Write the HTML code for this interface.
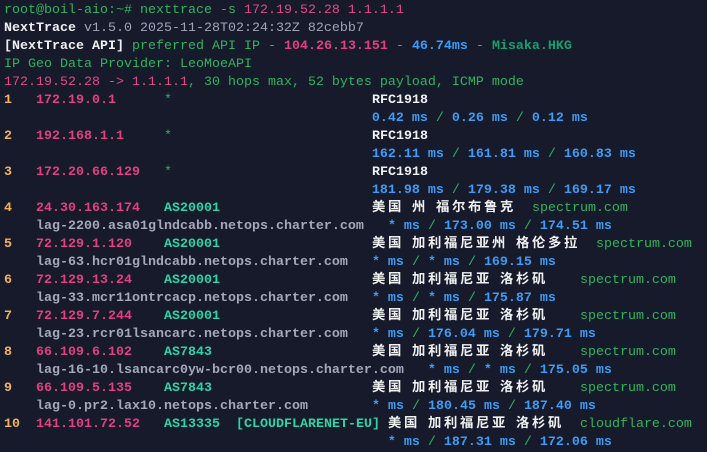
<!DOCTYPE html>
<html><head><meta charset="utf-8"><style>
html,body{margin:0;padding:0;background:#161a2b;width:707px;height:452px;overflow:hidden}
pre{margin:0;padding:2px 0 0 4px;font-family:"Liberation Mono","Noto Sans CJK SC",monospace;font-size:13.33px;line-height:18px;color:#a0a4b8;white-space:pre}
.g{color:#2fb45e}.p{color:#e24a86}.pb{color:#e2407f;font-weight:bold}.w{color:#f0f0f0;font-weight:bold}
.gr{color:#a5a8ba;font-weight:bold}.o{color:#f2b35e;font-weight:bold}.a{color:#2ed4a6;font-weight:bold}
.b{color:#3d9cf5;font-weight:bold}.dg{color:#17a06e;font-weight:bold}
.c{font-family:"Noto Sans CJK SC",sans-serif;letter-spacing:2.67px;color:#f0f0f0;font-weight:bold;line-height:0}
</style></head><body><pre><span class="g">root@boil-aio:~# nexttrace -s </span><span class="p">172.19.52.28 1.1.1.1</span>
<span class="w">NextTrace</span> v1.5.0 2025-11-28T02:24:32Z 82cebb7
<span class="w">[NextTrace API]</span><span class="g"> preferred API IP - </span><span class="pb">104.26.13.151</span><span class="g"> - </span><span class="b">46.74ms</span><span class="g"> - </span><span class="dg">Misaka.HKG</span>
<span class="g">IP Geo Data Provider: LeoMoeAPI</span>
<span class="p">172.19.52.28 -&gt; 1.1.1.1</span><span class="g">, 30 hops max, 52 bytes payload, ICMP mode</span>
<span class="o">1</span>   <span class="pb">172.19.0.1</span>      <span class="g">*</span>                         <span class="w">RFC1918</span>
                                              <span class="b">0.42 ms</span> <span class="g">/</span> <span class="b">0.26 ms</span> <span class="g">/</span> <span class="b">0.12 ms</span>
<span class="o">2</span>   <span class="pb">192.168.1.1</span>     <span class="g">*</span>                         <span class="w">RFC1918</span>
                                              <span class="b">162.11 ms</span> <span class="g">/</span> <span class="b">161.81 ms</span> <span class="g">/</span> <span class="b">160.83 ms</span>
<span class="o">3</span>   <span class="pb">172.20.66.129</span>   <span class="g">*</span>                         <span class="w">RFC1918</span>
                                              <span class="b">181.98 ms</span> <span class="g">/</span> <span class="b">179.38 ms</span> <span class="g">/</span> <span class="b">169.17 ms</span>
<span class="o">4</span>   <span class="pb">24.30.163.174</span>   <span class="a">AS20001</span>                   <span class="c">美国</span> <span class="c">州</span> <span class="c">福尔布鲁克</span>  <span class="g">spectrum.com</span>
    <span class="gr">lag-2200.asa01glndcabb.netops.charter.com</span>   <span class="b">* ms</span> <span class="g">/</span> <span class="b">173.00 ms</span> <span class="g">/</span> <span class="b">174.51 ms</span>
<span class="o">5</span>   <span class="pb">72.129.1.120</span>    <span class="a">AS20001</span>                   <span class="c">美国</span> <span class="c">加利福尼亚州</span> <span class="c">格伦多拉</span>  <span class="g">spectrum.com</span>
    <span class="gr">lag-63.hcr01glndcabb.netops.charter.com</span>   <span class="b">* ms</span> <span class="g">/</span> <span class="b">* ms</span> <span class="g">/</span> <span class="b">169.15 ms</span>
<span class="o">6</span>   <span class="pb">72.129.13.24</span>    <span class="a">AS20001</span>                   <span class="c">美国</span> <span class="c">加利福尼亚</span> <span class="c">洛杉矶</span>    <span class="g">spectrum.com</span>
    <span class="gr">lag-33.mcr11ontrcacp.netops.charter.com</span>   <span class="b">* ms</span> <span class="g">/</span> <span class="b">* ms</span> <span class="g">/</span> <span class="b">175.87 ms</span>
<span class="o">7</span>   <span class="pb">72.129.7.244</span>    <span class="a">AS20001</span>                   <span class="c">美国</span> <span class="c">加利福尼亚</span> <span class="c">洛杉矶</span>    <span class="g">spectrum.com</span>
    <span class="gr">lag-23.rcr01lsancarc.netops.charter.com</span>   <span class="b">* ms</span> <span class="g">/</span> <span class="b">176.04 ms</span> <span class="g">/</span> <span class="b">179.71 ms</span>
<span class="o">8</span>   <span class="pb">66.109.6.102</span>    <span class="a">AS7843</span>                    <span class="c">美国</span> <span class="c">加利福尼亚</span> <span class="c">洛杉矶</span>    <span class="g">spectrum.com</span>
    <span class="gr">lag-16-10.lsancarc0yw-bcr00.netops.charter.com</span>   <span class="b">* ms</span> <span class="g">/</span> <span class="b">* ms</span> <span class="g">/</span> <span class="b">175.05 ms</span>
<span class="o">9</span>   <span class="pb">66.109.5.135</span>    <span class="a">AS7843</span>                    <span class="c">美国</span> <span class="c">加利福尼亚</span> <span class="c">洛杉矶</span>    <span class="g">spectrum.com</span>
    <span class="gr">lag-0.pr2.lax10.netops.charter.com</span>        <span class="b">* ms</span> <span class="g">/</span> <span class="b">180.45 ms</span> <span class="g">/</span> <span class="b">187.40 ms</span>
<span class="o">10</span>  <span class="pb">141.101.72.52</span>   <span class="a">AS13335</span>  <span class="a">[CLOUDFLARENET-EU]</span> <span class="c">美国</span> <span class="c">加利福尼亚</span> <span class="c">洛杉矶</span>  <span class="g">cloudflare.com</span>
                                                <span class="b">* ms</span> <span class="g">/</span> <span class="b">187.31 ms</span> <span class="g">/</span> <span class="b">172.06 ms</span>
</pre></body></html>
